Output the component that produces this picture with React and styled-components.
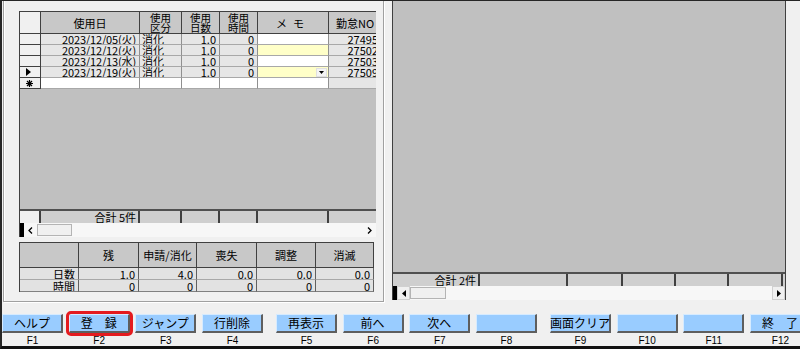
import React from 'react';
import styled, { createGlobalStyle } from 'styled-components';

const Global = createGlobalStyle`
  html, body { margin: 0; padding: 0; background: #f0f0f0; }
  body { font-family: "Noto Sans CJK JP", "Liberation Sans", sans-serif; color: #000; }
`;

const Frame = styled.div`
  width: 800px;
  height: 349px;
  box-sizing: border-box;
  border-left: 2px solid #262626;
  border-top: 1px solid #262626;
  border-bottom: 3px solid #111;
  background: #f0f0f0;
  overflow: hidden;
  display: flex;
  flex-direction: column;
`;

const Main = styled.div`
  display: flex;
  height: 301px;
  flex: none;
`;

const LeftPanel = styled.div`
  margin-left: 1px;
  width: 381px;
  height: 301px;
  box-sizing: border-box;
  border: 1px solid #a0a0a0;
  border-top: none;
  box-shadow: 1px 1px 0 #fff, inset 1px 0 0 #fff;
  padding: 10px 0 0 15px;
  display: flex;
  flex-direction: column;
`;

const Grid = styled.div`
  width: ${p => p.$w}px;
  height: ${p => p.$h}px;
  flex: none;
  box-sizing: border-box;
  display: flex;
  flex-direction: column;
  overflow: hidden;
  background: #c0c0c0;
  border-left: 1px solid #404040;
  border-top: ${p => (p.$noTop ? 'none' : '1px solid #404040')};
  border-right: ${p => (p.$right ? '1px solid #404040' : 'none')};
`;

const Row = styled.div`
  display: grid;
  grid-template-columns: ${p => p.$cols};
  height: ${p => p.$h}px;
  flex: none;
`;

const HeadCell = styled.div`
  box-sizing: border-box;
  border-right: 1px solid #404040;
  border-bottom: 1px solid #404040;
  background: ${p => (p.$corner ? '#f0f0f0' : '#c8c8c8')};
  display: flex;
  align-items: center;
  justify-content: center;
  text-align: center;
  font-size: ${p => (p.$two ? '10.5px' : '11px')};
  line-height: 10px;
  white-space: pre-line;
  overflow: hidden;
  letter-spacing: ${p => p.$ls || 0};
`;

const Cell = styled.div`
  box-sizing: border-box;
  border-right: 1px solid ${p => p.$vline || '#909090'};
  border-bottom: 1px solid ${p => p.$hline || '#a8a8a8'};
  background: ${p => p.$bg || '#e6e6e6'};
  display: flex;
  align-items: center;
  justify-content: ${p => (p.$align === 'right' ? 'flex-end' : p.$align === 'center' ? 'center' : 'flex-start')};
  padding: 0 ${p => (p.$align === 'right' ? 3 : 0)}px 0 ${p => (p.$align === 'left' ? 2 : 0)}px;
  font-size: 11px;
  line-height: 10px;
  letter-spacing: ${p => p.$ls || 0};
  white-space: nowrap;
  overflow: hidden;
`;

const Selector = styled.div`
  box-sizing: border-box;
  border-right: 1px solid #404040;
  border-bottom: 1px solid #404040;
  background: #f0f0f0;
  display: flex;
  align-items: center;
  padding-left: 6px;
  font-size: 9px;
  line-height: 9px;
`;

const DropBtn = styled.div`
  width: 11px;
  height: 9px;
  box-sizing: border-box;
  background: #f4f4f4;
  border: 1px solid #e0e0e0;
  margin-right: -2px;
  display: flex;
  align-items: center;
  justify-content: center;
`;

const Empty = styled.div`
  flex: 1;
  background: #c0c0c0;
`;

const FootRow = styled.div`
  display: grid;
  grid-template-columns: ${p => p.$cols};
  height: ${p => p.$h}px;
  flex: none;
  box-sizing: border-box;
  border-top: 2px solid #505050;
`;

const FootCell = styled.div`
  box-sizing: border-box;
  border-right: 2px solid #404040;
  background: ${p => (p.$light ? '#f0f0f0' : '#cfcfcf')};
  display: flex;
  align-items: center;
  justify-content: flex-end;
  padding-right: 2px;
  font-size: 11px;
  line-height: 10px;
  white-space: nowrap;
  overflow: hidden;
`;

const HScroll = styled.div`
  display: flex;
  height: 14px;
  flex: none;
  background: #f7f7f7;
  box-sizing: border-box;
`;

const ScrollMark = styled.div`
  width: 4px;
  background: #000;
  flex: none;
`;

const ScrollBtn = styled.div`
  width: 13px;
  flex: none;
  display: flex;
  align-items: center;
  justify-content: center;
  background: ${p => (p.$boxed ? '#f0f0f0' : 'transparent')};
  border: ${p => (p.$boxed ? '1px solid #d0d0d0' : 'none')};
  box-sizing: border-box;
`;

const Thumb = styled.div`
  width: ${p => p.$w}px;
  flex: none;
  box-sizing: border-box;
  margin: 1px 0;
  background: #f0f0f0;
  border: 1px solid #b4b4b4;
`;

const Track = styled.div`
  flex: 1;
`;

const SumTable = styled.div`
  margin-top: 5px;
  width: 355px;
  box-sizing: border-box;
  border-top: 1px solid #404040;
  border-left: 1px solid #404040;
`;

const SumHead = styled.div`
  box-sizing: border-box;
  border-right: 1px solid #404040;
  border-bottom: 1px solid #404040;
  background: #c8c8c8;
  display: flex;
  align-items: center;
  justify-content: center;
  font-size: 11px;
  line-height: 10px;
`;

const RightGrid = styled(Grid)`
  margin-left: 8px;
`;

const FKeyBar = styled.div`
  display: flex;
  gap: 13px;
  padding: 12px 0 0 0;
  height: 44px;
  box-sizing: border-box;
`;

const FGroup = styled.div`
  display: flex;
  gap: 5.67px;
  flex: none;
`;

const FKey = styled.div`
  position: relative;
  width: 61px;
  flex: none;
  display: flex;
  flex-direction: column;
  align-items: center;
`;

const FButton = styled.div`
  width: 61px;
  height: 20px;
  box-sizing: border-box;
  background: #99ccff;
  border-style: solid;
  border-width: 1px 2px 2px 1px;
  border-color: #d6ebff #5e5e5e #5e5e5e #d6ebff;
  display: flex;
  align-items: center;
  justify-content: center;
  font-size: 12px;
  line-height: 12px;
  white-space: pre;
`;

const FLabel = styled.div`
  margin-top: 2px;
  font-family: "Liberation Sans", sans-serif;
  font-size: 10px;
  line-height: 11px;
`;

const Highlight = styled.div`
  position: absolute;
  left: -3px;
  top: -3px;
  width: 67px;
  height: 25px;
  box-sizing: border-box;
  border: 3px solid #e41b1f;
  border-radius: 5px;
`;

const LEFT_COLS = '21px 99px 42px 38px 38px 71px 53px';
const SUM_COLS = '59px 60px 58px 60px 59px 58px';
const RIGHT_COLS = '87px 88px 55px 53px 53px 54px 1fr';

const rows = [
  { date: '2023/12/05(火)', memo: '#ffffff', no: '27495' },
  { date: '2023/12/12(火)', memo: '#ffffc8', no: '27502' },
  { date: '2023/12/13(水)', memo: '#ffffff', no: '27503' },
  { date: '2023/12/19(火)', memo: '#ffffc8', no: '27509', current: true, drop: true },
];

const fkeys = [
  [['ヘルプ', 'F1'], ['登　録', 'F2', true], ['ジャンプ', 'F3'], ['行削除', 'F4']],
  [['再表示', 'F5'], ['前へ', 'F6'], ['次へ', 'F7'], ['', 'F8']],
  [['画面クリア', 'F9'], ['', 'F10'], ['', 'F11'], ['終　了', 'F12']],
];

const RowArrow = () => (
  <svg width="5" height="8" viewBox="0 0 5 8"><path d="M0 0 L5 4 L0 8 Z" fill="#000" /></svg>
);

const NewMark = () => (
  <svg width="7" height="7" viewBox="0 0 7 7" stroke="#000" strokeWidth="1.2">
    <path d="M3.5 0 V7 M0 3.5 H7 M1 1 L6 6 M6 1 L1 6" />
  </svg>
);

const DownTri = () => (
  <svg width="5" height="3" viewBox="0 0 5 3"><path d="M0 0 H5 L2.5 3 Z" fill="#000" /></svg>
);

const Chevron = ({ dir }) => (
  <svg width="5" height="7" viewBox="0 0 5 7" fill="none" stroke="#000" strokeWidth="1.3">
    <path d={dir === 'left' ? 'M4 0.5 L1 3.5 L4 6.5' : 'M1 0.5 L4 3.5 L1 6.5'} />
  </svg>
);

const Tri = ({ dir }) => (
  <svg width="4" height="7" viewBox="0 0 4 7">
    <path d={dir === 'left' ? 'M4 0 L0 3.5 L4 7 Z' : 'M0 0 L4 3.5 L0 7 Z'} fill="#000" />
  </svg>
);

export default function App() {
  return (
    <>
      <Global />
      <Frame>
        <Main>
          <LeftPanel>
            <Grid $w={357} $h={226}>
              <Row $cols={LEFT_COLS} $h={22}>
                <HeadCell $corner />
                <HeadCell>使用日</HeadCell>
                <HeadCell $two>{'使用\n区分'}</HeadCell>
                <HeadCell $two>{'使用\n日数'}</HeadCell>
                <HeadCell $two>{'使用\n時間'}</HeadCell>
                <HeadCell $ls="6px">メモ</HeadCell>
                <HeadCell>勤怠NO</HeadCell>
              </Row>
              {rows.map(r => (
                <Row key={r.no} $cols={LEFT_COLS} $h={11}>
                  <Selector>{r.current ? <RowArrow /> : null}</Selector>
                  <Cell $align="right" $ls="-0.15px">{r.date}</Cell>
                  <Cell $align="left">消化</Cell>
                  <Cell $align="right">1.0</Cell>
                  <Cell $align="right">0</Cell>
                  <Cell $bg={r.memo} $align="right">{r.drop ? <DropBtn><DownTri /></DropBtn> : null}</Cell>
                  <Cell $align="right">{r.no}</Cell>
                </Row>
              ))}
              <Row $cols={LEFT_COLS} $h={11}>
                <Selector><NewMark /></Selector>
                <Cell $bg="#fff" />
                <Cell $bg="#fff" />
                <Cell $bg="#fff" />
                <Cell $bg="#fff" />
                <Cell $bg="#fff" />
                <Cell $bg="#e6e6e6" />
              </Row>
              <Empty />
              <FootRow $cols={LEFT_COLS} $h={14}>
                <FootCell $light />
                <FootCell>合計 5件</FootCell>
                <FootCell />
                <FootCell />
                <FootCell />
                <FootCell />
                <FootCell />
              </FootRow>
              <HScroll>
                <ScrollMark />
                <ScrollBtn><Chevron dir="left" /></ScrollBtn>
                <Thumb $w={35} />
                <Track />
                <ScrollBtn><Chevron dir="right" /></ScrollBtn>
              </HScroll>
            </Grid>

            <SumTable>
              <Row $cols={SUM_COLS} $h={25}>
                <SumHead />
                <SumHead>残</SumHead>
                <SumHead>申請/消化</SumHead>
                <SumHead>喪失</SumHead>
                <SumHead>調整</SumHead>
                <SumHead>消滅</SumHead>
              </Row>
              <Row $cols={SUM_COLS} $h={12}>
                <Cell $align="right" $vline="#606060" $bg="#e2e2e2">日数</Cell>
                <Cell $align="right" $vline="#606060" $bg="#e2e2e2">1.0</Cell>
                <Cell $align="right" $vline="#606060" $bg="#e2e2e2">4.0</Cell>
                <Cell $align="right" $vline="#606060" $bg="#e2e2e2">0.0</Cell>
                <Cell $align="right" $vline="#606060" $bg="#e2e2e2">0.0</Cell>
                <Cell $align="right" $vline="#606060" $bg="#e2e2e2">0.0</Cell>
              </Row>
              <Row $cols={SUM_COLS} $h={12}>
                <Cell $align="right" $vline="#606060" $hline="#808080" $bg="#e2e2e2">時間</Cell>
                <Cell $align="right" $vline="#606060" $hline="#808080" $bg="#e2e2e2">0</Cell>
                <Cell $align="right" $vline="#606060" $hline="#808080" $bg="#e2e2e2">0</Cell>
                <Cell $align="right" $vline="#606060" $hline="#808080" $bg="#e2e2e2">0</Cell>
                <Cell $align="right" $vline="#606060" $hline="#808080" $bg="#e2e2e2">0</Cell>
                <Cell $align="right" $vline="#606060" $hline="#808080" $bg="#e2e2e2">0</Cell>
              </Row>
            </SumTable>
          </LeftPanel>

          <RightGrid $w={394} $h={299} $noTop $right>
            <Empty />
            <FootRow $cols={RIGHT_COLS} $h={14}>
              <FootCell>合計 2件</FootCell>
              <FootCell />
              <FootCell />
              <FootCell />
              <FootCell />
              <FootCell />
              <FootCell />
            </FootRow>
            <HScroll>
              <ScrollMark />
              <ScrollBtn $boxed><Tri dir="left" /></ScrollBtn>
              <Thumb $w={36} />
              <Track />
              <ScrollBtn $boxed><Tri dir="right" /></ScrollBtn>
            </HScroll>
          </RightGrid>
        </Main>

        <FKeyBar>
          {fkeys.map((g, gi) => (
            <FGroup key={gi}>
              {g.map(([label, key, hl]) => (
                <FKey key={key}>
                  <FButton>{label}</FButton>
                  <FLabel>{key}</FLabel>
                  {hl ? <Highlight /> : null}
                </FKey>
              ))}
            </FGroup>
          ))}
        </FKeyBar>
      </Frame>
    </>
  );
}
